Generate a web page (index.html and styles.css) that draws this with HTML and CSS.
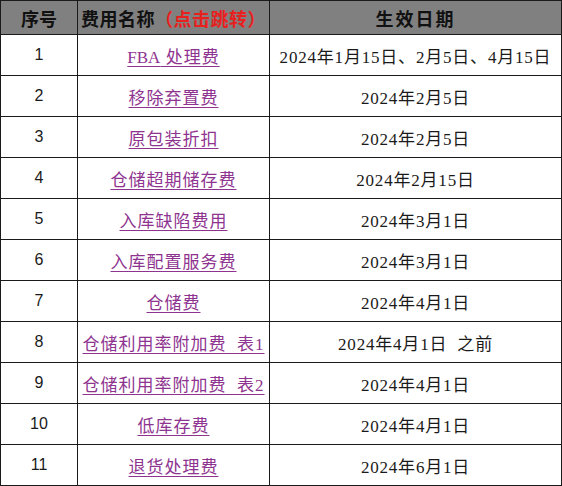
FILE: index.html
```html
<!DOCTYPE html>
<html lang="zh-CN">
<head>
<meta charset="utf-8">
<title>费用列表</title>
<link rel="stylesheet" href="styles.css">
</head>
<body>
<table class="fee-table">
  <colgroup>
    <col class="c-no">
    <col class="c-name">
    <col class="c-date">
  </colgroup>
  <thead>
    <tr>
      <th class="h-no">序号</th>
      <th class="h-name">费用名称<span class="red">（点击跳转）</span></th>
      <th class="h-date">生效日期</th>
    </tr>
  </thead>
  <tbody>
    <tr><td class="no">1</td><td class="name"><a href="#"><span class="latin">FBA</span> 处理费</a></td><td class="date">2024年1月15日、2月5日、4月15日</td></tr>
    <tr><td class="no">2</td><td class="name"><a href="#">移除弃置费</a></td><td class="date">2024年2月5日</td></tr>
    <tr><td class="no">3</td><td class="name"><a href="#">原包装折扣</a></td><td class="date">2024年2月5日</td></tr>
    <tr><td class="no">4</td><td class="name"><a href="#">仓储超期储存费</a></td><td class="date">2024年2月15日</td></tr>
    <tr><td class="no">5</td><td class="name"><a href="#">入库缺陷费用</a></td><td class="date">2024年3月1日</td></tr>
    <tr><td class="no">6</td><td class="name"><a href="#">入库配置服务费</a></td><td class="date">2024年3月1日</td></tr>
    <tr><td class="no">7</td><td class="name"><a href="#">仓储费</a></td><td class="date">2024年4月1日</td></tr>
    <tr><td class="no">8</td><td class="name"><a href="#">仓储利用率附加费&nbsp;&nbsp;表1</a></td><td class="date">2024年4月1日&nbsp; 之前</td></tr>
    <tr><td class="no">9</td><td class="name"><a href="#">仓储利用率附加费&nbsp;&nbsp;表2</a></td><td class="date">2024年4月1日</td></tr>
    <tr><td class="no">10</td><td class="name"><a href="#">低库存费</a></td><td class="date">2024年4月1日</td></tr>
    <tr><td class="no">11</td><td class="name"><a href="#">退货处理费</a></td><td class="date">2024年6月1日</td></tr>
  </tbody>
</table>
</body>
</html>
```

FILE: styles.css
```css
html, body {
  margin: 0;
  padding: 0;
  background: #ffffff;
}

.fee-table {
  border-collapse: collapse;
  table-layout: fixed;
  width: 561px;
  font-family: "Liberation Serif", "Noto Sans CJK SC", serif;
  font-size: 16px;
  color: #1a1a1a;
}

.c-no { width: 77px; }
.c-name { width: 192px; }
.c-date { width: 292px; }

.fee-table th,
.fee-table td {
  border: 1.5px solid #1a1a1a;
  text-align: center;
  vertical-align: middle;
  padding: 0;
  white-space: nowrap;
}

.fee-table th {
  background: #808080;
  height: 33px;
  font-family: "Noto Sans CJK SC", sans-serif;
  font-weight: 700;
  font-size: 18px;
  color: #111111;
  letter-spacing: 1px;
}

.fee-table th.h-no {
  letter-spacing: 0;
}

.fee-table th.h-name {
  text-align: left;
  padding-left: 3px;
  letter-spacing: 0.5px;
}

.fee-table th.h-date {
  letter-spacing: 2px;
}

.fee-table th.h-date,
.fee-table td.date {
  border-left: 1.5px solid #7a7a7a;
}

.red {
  color: #e8201e;
}

.fee-table td {
  height: 40px;
}

.fee-table td.no {
  font-family: "Liberation Sans", "Noto Sans CJK SC", sans-serif;
  font-size: 16px;
}

.fee-table td.date {
  font-size: 17px;
  letter-spacing: 0.8px;
}

.fee-table td.name a {
  color: #8e3490;
  text-decoration: underline;
  text-underline-offset: 3px;
  font-size: 17px;
  letter-spacing: 1px;
}

.fee-table td.name a .latin {
  letter-spacing: 0;
}
```
